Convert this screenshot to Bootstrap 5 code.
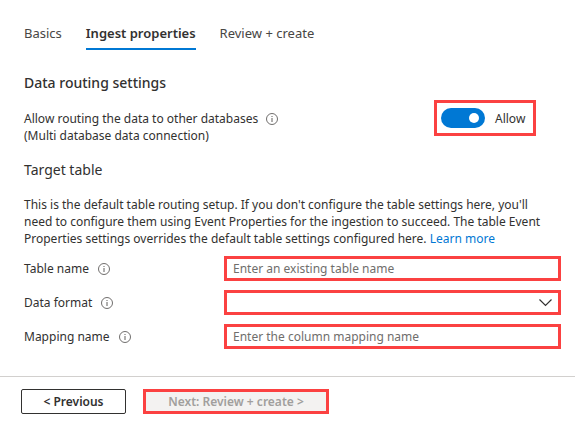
<!DOCTYPE html>
<html lang="en">
<head>
<meta charset="utf-8">
<meta name="viewport" content="width=device-width, initial-scale=1">
<title>Ingest properties</title>
<link href="https://cdn.jsdelivr.net/npm/bootstrap@5.3.0/dist/css/bootstrap.min.css" rel="stylesheet">
<style>
  :root { --azure: #0078d4; --callout: #fb4141; --ink: #323130; }
  body { font: 12px/17px "Noto Sans", "Open Sans", sans-serif; color: var(--ink); background: #fff; }
  .wizard-tabs { gap: 24px; padding: 25px 24px 0; font-size: 13px; }
  .wizard-tabs .nav-link { padding: 0 0 6px; color: #484644; border-bottom: 2px solid transparent; border-radius: 0; }
  .wizard-tabs .nav-link.active { color: var(--ink); font-weight: 600; border-bottom-color: var(--azure); }
  .wizard-body { padding: 23px 14px 27px 24px; }
  .section-title { font-size: 14px; line-height: 20px; margin: 0; font-weight: 400; }
  .section-title.strong { font-weight: 500; }
  .info-icon { width: 12px; height: 12px; flex: none; color: #605e5c; }
  .routing { margin-top: 7px; padding-right: 25px; }
  .routing-text { padding-top: 10px; }
  .callout { border: 3px solid var(--callout); }
  .switch-box { padding: 5px 7px 5px 4px; gap: 10px; min-height: 36px; width: 102px; }
  .switch-box .form-check-input { width: 44px; height: 20px; margin: 0; border: 0; background-color: var(--azure); background-size: 20px 20px;
    background-image: url("data:image/svg+xml,%3Csvg xmlns='http://www.w3.org/2000/svg' viewBox='0 0 20 20'%3E%3Ccircle cx='9' cy='10' r='5' fill='%23fff'/%3E%3C/svg%3E"); }
  .target { margin-top: 16px; }
  .blurb { margin: 16px 0 9px; max-width: 530px; }
  .blurb a { color: var(--azure); text-decoration: none; }
  .field-list { display: grid; gap: 9px; }
  .field-name { width: 200px; flex: none; gap: 9px; }
  .field-list .form-control, .field-list .form-select { height: 25px; min-height: 25px; padding: 0 6px; font-size: 12px; line-height: 17px; color: var(--ink); border: 3px solid var(--callout); border-radius: 0; }
  .field-list .form-control::placeholder { color: #706e6c; opacity: 1; }
  .field-list .form-select { background-position: right 5px center; background-size: 15px 15px;
    background-image: url("data:image/svg+xml,%3Csvg xmlns='http://www.w3.org/2000/svg' viewBox='0 0 15 15'%3E%3Cpath d='M1.5 4.5l6 6 6-6' fill='none' stroke='%23323130' stroke-width='1.2'/%3E%3C/svg%3E"); }
  .wizard-footer { border-top: 1px solid #d2d0ce; padding: 12px 21px; gap: 17px; }
  .wizard-footer .btn { font-size: 12px; line-height: 17px; font-weight: 600; padding: 0; height: 25px; }
  .btn-back { width: 105px; color: var(--ink); border: 1px solid var(--ink); border-radius: 2px; }
  .wizard-footer .btn-forward { width: 186px; color: #a19f9d; background: #f3f2f1; border: 3px solid var(--callout); border-radius: 0; opacity: 1; }
</style>
</head>
<body>
<svg class="d-none" aria-hidden="true">
  <symbol id="info" viewBox="0 0 12 12">
    <circle cx="6" cy="6" r="5.5" fill="none" stroke="currentColor" stroke-width=".9"/>
    <path d="M6 5v4M6 3v1" stroke="currentColor" stroke-width="1"/>
  </symbol>
</svg>

<nav class="nav wizard-tabs" aria-label="Steps">
  <a class="nav-link" href="#basics">Basics</a>
  <a class="nav-link active" href="#ingest" aria-current="page">Ingest properties</a>
  <a class="nav-link" href="#review">Review + create</a>
</nav>

<main class="wizard-body">
  <h1 class="section-title strong">Data routing settings</h1>
  <div class="routing d-flex justify-content-between align-items-start">
    <div class="routing-text">
      <div class="d-flex align-items-center gap-2"><span>Allow routing the data to other databases</span><svg class="info-icon"><use href="#info"/></svg></div>
      <div>(Multi database data connection)</div>
    </div>
    <div class="switch-box callout form-switch d-flex align-items-center">
      <input class="form-check-input" type="checkbox" role="switch" id="allow" checked>
      <label for="allow">Allow</label>
    </div>
  </div>

  <h2 class="section-title target">Target table</h2>
  <p class="blurb"><span>This is the default table routing setup. If you don't configure the table settings here, you'll need to configure them using Event Properties for the ingestion to succeed. The table Event Properties settings overrides the default table settings configured here.</span> <a href="#learn">Learn more</a></p>

  <form class="field-list" id="fields">
    <div class="d-flex align-items-center">
      <div class="field-name d-flex align-items-center"><label for="table">Table name</label><svg class="info-icon"><use href="#info"/></svg></div>
      <input class="form-control" id="table" type="text" placeholder="Enter an existing table name">
    </div>
    <div class="d-flex align-items-center">
      <div class="field-name d-flex align-items-center"><label for="format">Data format</label><svg class="info-icon"><use href="#info"/></svg></div>
      <select class="form-select" id="format"><option selected></option></select>
    </div>
    <div class="d-flex align-items-center">
      <div class="field-name d-flex align-items-center"><label for="mapping">Mapping name</label><svg class="info-icon"><use href="#info"/></svg></div>
      <input class="form-control" id="mapping" type="text" placeholder="Enter the column mapping name">
    </div>
  </form>
</main>

<footer class="wizard-footer d-flex">
  <button class="btn btn-back" type="button">&lt; Previous</button>
  <button class="btn btn-forward" type="button" disabled>Next: Review + create &gt;</button>
</footer>
<script src="https://cdn.jsdelivr.net/npm/bootstrap@5.3.0/dist/js/bootstrap.bundle.min.js"></script>
</body>
</html>
